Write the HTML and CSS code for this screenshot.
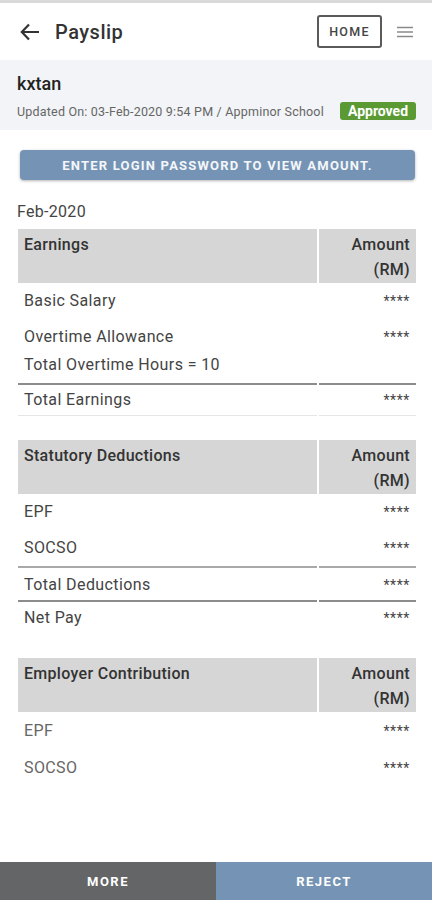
FILE: index.html
```html
<!DOCTYPE html>
<html>
<head>
<meta charset="utf-8">
<link rel="stylesheet" href="styles.css">
</head>
<body>
<div class="status"></div>
<header class="topbar">
  <svg class="back" width="20" height="18" viewBox="0 0 20 18"><path d="M19 9H2M9 1.5L1.8 9L9 16.5" fill="none" stroke="#333" stroke-width="2.2"/></svg>
  <div class="title">Payslip</div>
  <div class="home">HOME</div>
  <svg class="menu" width="16" height="12" viewBox="0 0 16 12"><path d="M0 1.5H16M0 6H16M0 10.5H16" stroke="#8a8a8a" stroke-width="1.6"/></svg>
</header>
<section class="info">
  <div class="user">kxtan</div>
  <div class="meta">
    <span class="updated">Updated On: 03-Feb-2020 9:54 PM / Appminor School</span>
    <span class="badge">Approved</span>
  </div>
</section>
<main class="content">
  <div class="pwbtn">ENTER LOGIN PASSWORD TO VIEW AMOUNT.</div>
  <div class="month">Feb-2020</div>

  <div class="grid">
    <div class="hd">Earnings</div><div class="hd amt">Amount<br>(RM)</div>
    <div class="c">Basic Salary</div><div class="c v">****</div>
    <div class="c">Overtime Allowance<br>Total Overtime Hours = 10</div><div class="c v">****</div>
    <div class="c tot">Total Earnings</div><div class="c v tot">****</div>
  </div>

  <div class="grid sec">
    <div class="hd">Statutory Deductions</div><div class="hd amt">Amount<br>(RM)</div>
    <div class="c">EPF</div><div class="c v">****</div>
    <div class="c">SOCSO</div><div class="c v">****</div>
    <div class="c tot2">Total Deductions</div><div class="c v tot2">****</div>
    <div class="c net">Net Pay</div><div class="c v net">****</div>
  </div>

  <div class="grid sec">
    <div class="hd">Employer Contribution</div><div class="hd amt">Amount<br>(RM)</div>
    <div class="c light">EPF</div><div class="c v light">****</div>
    <div class="c light">SOCSO</div><div class="c v light">****</div>
  </div>
</main>
<footer class="bottom">
  <div class="bbtn more">MORE</div>
  <div class="bbtn reject">REJECT</div>
</footer>
</body>
</html>
```
FILE: styles.css
```css
* { box-sizing: border-box; }
html, body { margin: 0; padding: 0; }
body {
  width: 432px;
  height: 900px;
  font-family: Roboto, "Liberation Sans", sans-serif;
  color: #333;
  background: #fff;
  display: flex;
  flex-direction: column;
  overflow: hidden;
}
.status { height: 3px; background: #d9d9d9; }
.topbar {
  height: 57px;
  display: flex;
  align-items: center;
  padding: 0 19px 0 20px;
  background: #fff;
}
.back { display: block; }
.title {
  margin-left: 15px;
  font-size: 20px;
  font-weight: 500;
  color: #333;
  letter-spacing: 0.5px;
  flex: 1;
}
.home {
  width: 65px;
  height: 33px;
  border: 2px solid #5a5a5a;
  border-radius: 3px;
  display: flex;
  align-items: center;
  justify-content: center;
  font-size: 12.5px;
  font-weight: 500;
  letter-spacing: 1.3px;
  color: #444;
}
.menu { margin-left: 15px; display: block; }
.info {
  height: 70px;
  background: #f2f4f7;
  padding: 13px 16px 0 17px;
}
.user {
  font-size: 18px;
  font-weight: 500;
  color: #222;
  line-height: 22px;
}
.meta {
  margin-top: 7px;
  display: flex;
  align-items: center;
  justify-content: space-between;
}
.updated { font-size: 12.5px; color: #666; letter-spacing: 0.2px; }
.badge {
  background: #5b9a33;
  color: #fff;
  font-size: 14px;
  font-weight: 700;
  line-height: 18px;
  height: 18px;
  width: 76px;
  text-align: center;
  border-radius: 3px;
}
.content { flex: 1; padding: 20px 16px 0 18px; }
.pwbtn {
  margin: 0 1px 0 2px;
  height: 30px;
  background: #7594b5;
  border-radius: 4px;
  box-shadow: 0 1px 3px rgba(0,0,0,0.3);
  color: #f4f6f9;
  font-size: 13px;
  font-weight: 700;
  letter-spacing: 1.2px;
  display: flex;
  align-items: center;
  justify-content: center;
}
.month {
  margin: 23px 0 0 -1px;
  font-size: 16px;
  letter-spacing: 0.3px;
  color: #444;
  line-height: 18px;
}
.grid {
  margin-top: 8px;
  display: grid;
  grid-template-columns: 1fr 97px;
  column-gap: 2px;
}
.grid.sec { margin-top: 24px; }
.hd {
  background: #d6d6d6;
  height: 54px;
  padding: 3px 6px 0;
  font-size: 16px;
  letter-spacing: 0.3px;
  font-weight: 500;
  color: #333;
  line-height: 25px;
}
.hd.amt { text-align: right; }
.c {
  padding: 4px 6px;
  font-size: 16px;
  letter-spacing: 0.4px;
  line-height: 28px;
  color: #444;
}
.c.v { text-align: right; font-size: 14px; letter-spacing: 0.6px; color: #444; }
.c.tot { border-top: 2px solid #8c8c8c; padding: 1px 6px 1px; border-bottom: 1px solid #e6e6e6; }
.c.tot2 { border-top: 2px solid #a9a9a9; border-bottom: 2px solid #8c8c8c; padding: 3px 6px 1px; }
.c.net { padding: 2px 6px; }
.c.light { padding: 5px 6px 4px; }
.c.light:not(.v) { color: #666; }
.bottom {
  height: 38px;
  display: flex;
}
.bbtn {
  flex: 1;
  display: flex;
  align-items: center;
  justify-content: center;
  color: #fff;
  font-size: 13px;
  font-weight: 700;
  letter-spacing: 1.5px;
}
.more { background: #636567; }
.reject { background: #7594b5; }
```
